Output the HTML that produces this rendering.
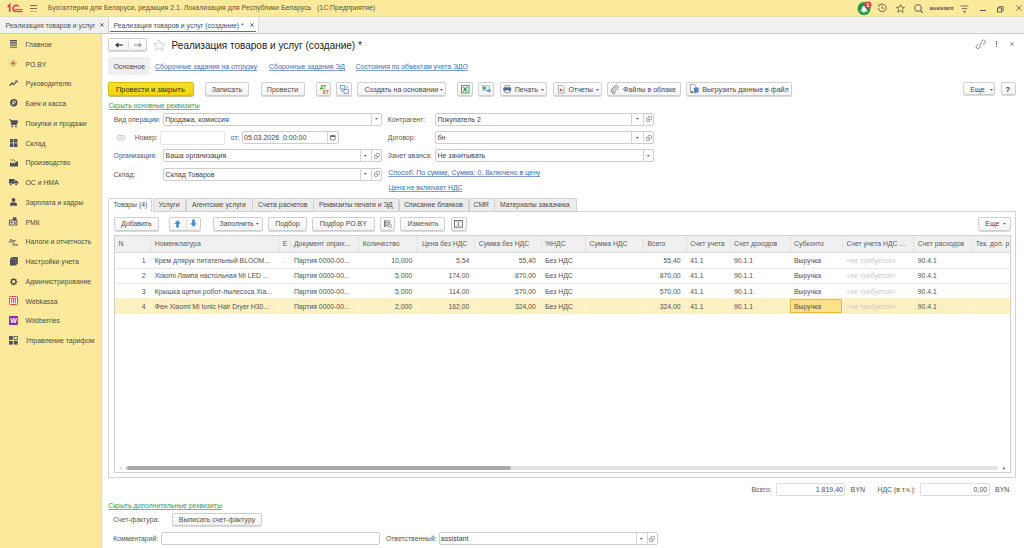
<!DOCTYPE html>
<html><head><meta charset="utf-8"><style>
*{box-sizing:border-box;margin:0;padding:0}
html,body{width:1024px;height:548px;overflow:hidden;background:#fff;font-family:"Liberation Sans",sans-serif;font-size:7px;color:#454545}
.a{position:absolute;white-space:nowrap}
.lnk{color:#3c6db0;text-decoration:underline;text-decoration-color:#7fa0d0;text-decoration-thickness:0.5px;text-underline-offset:1px;text-decoration-skip-ink:none}
.glnk{color:#2f9c50;text-decoration:underline;text-decoration-color:#6cbf86;text-decoration-thickness:0.5px;text-underline-offset:1px;text-decoration-skip-ink:none}
.btn{position:absolute;border:1px solid #cfcfcf;border-radius:2px;background:linear-gradient(#ffffff,#f3f3f3);box-shadow:0 0.8px 0.5px rgba(0,0,0,0.2)}
.inp{position:absolute;border:1px solid #cdcdcd;border-radius:2px;background:#fff}
</style></head><body>
<div class="a" style="left:0px;top:0px;width:1024.00px;height:16.50px;background:#fbea9c"></div>
<div class="a" style="left:0px;top:16.5px;width:1024.00px;height:17.00px;background:#f1f1f1;border-bottom:1px solid #c9c9c9"></div>
<div class="a" style="left:0px;top:16px;width:1024.00px;height:1.00px;background:#e6dfb0"></div>
<svg class="a" style="left:6.5px;top:3.8px;overflow:visible" width="16" height="8.5" viewBox="0 0 16 8.5"><path d="M0.6 2.9 L2.7 0.6 V7.8" fill="none" stroke="#e8313b" stroke-width="1.5"/><path d="M11.9 2.6 A3.3 3.3 0 1 0 7.4 7.3" fill="none" stroke="#e8313b" stroke-width="1.4"/><rect x="7" y="5.2" width="8.6" height="1.05" fill="#e8313b"/><rect x="7" y="7.1" width="8.6" height="1.05" fill="#e8313b"/></svg>
<div class="a" style="left:30px;top:5px;width:7.30px;height:0.95px;background:#7a6c4e"></div>
<div class="a" style="left:30px;top:8px;width:7.30px;height:0.95px;background:#7a6c4e"></div>
<div class="a" style="left:30px;top:10.5px;width:7.30px;height:0.95px;background:#bfb27a"></div>
<div class="a " style="left:48px;top:4.00px;font-size:6.95px;line-height:7.99px;color:#5a5240;">Бухгалтерия для Беларуси, редакция 2.1. Локализация для Республики Беларусь&nbsp;&nbsp;&nbsp;(1С:Предприятие)</div>
<svg class="a" style="left:856.5px;top:1.5px;overflow:visible" width="14" height="14" viewBox="0 0 14 14"><circle cx="7" cy="6.6" r="6.5" fill="#1f9a4c"/><path d="M3.4 9.4 Q3.6 8.6 4.6 7.6 L5.2 5.2 Q7 2.6 8.8 5.2 L9.4 7.6 Q10.4 8.6 10.6 9.4 Z" fill="#fff"/><path d="M6 10.3 H8" stroke="#fff" stroke-width="0.9"/></svg>
<svg class="a" style="left:863.5px;top:0.6px;overflow:visible" width="8" height="8" viewBox="0 0 8 8"><circle cx="3.9" cy="4" r="3.6" fill="#e23a45"/><text x="3.9" y="6.3" font-family="Liberation Sans" font-weight="bold" font-size="6" fill="#fff" text-anchor="middle">1</text></svg>
<svg class="a" style="left:877px;top:3.1px;overflow:visible" width="10" height="10" viewBox="0 0 10 10"><path d="M1.5 5 A3.8 3.8 0 1 0 2.6 2.2" fill="none" stroke="#555" stroke-width="0.9"/><path d="M0.8 1.2 L2.8 2.6 L1.2 3.8" fill="none" stroke="#555" stroke-width="0.8"/><path d="M5.3 2.8 L5.3 5.2 L6.8 6.3" fill="none" stroke="#555" stroke-width="0.8"/></svg>
<svg class="a" style="left:895.5px;top:3.5px;overflow:visible" width="9" height="9" viewBox="0 0 9 9"><path d="M4.5 0.5 L5.7 3.2 L8.5 3.4 L6.4 5.3 L7.1 8.3 L4.5 6.7 L1.9 8.3 L2.6 5.3 L0.5 3.4 L3.3 3.2 Z" fill="none" stroke="#555" stroke-width="0.8" stroke-linejoin="round"/></svg>
<svg class="a" style="left:913.5px;top:3.5px;overflow:visible" width="9" height="10" viewBox="0 0 9 10"><circle cx="4" cy="4" r="3.4" fill="none" stroke="#555" stroke-width="0.9"/><path d="M6.4 6.4 L8.6 8.8" stroke="#555" stroke-width="1.1"/></svg>
<div class="a " style="left:929.5px;top:4.08px;font-size:6.1px;line-height:7.01px;color:#222;">assistant</div>
<svg class="a" style="left:960px;top:4.5px;overflow:visible" width="9" height="9" viewBox="0 0 9 9"><path d="M0.5 1 H8.5 M1.8 3.6 H7.2 M3 6.2 H6" stroke="#555" stroke-width="0.8"/><path d="M3.8 7.2 L5.2 7.2 L4.5 8.4 Z" fill="#555"/></svg>
<div class="a" style="left:980px;top:9.8px;width:5.50px;height:0.80px;background:#555"></div>
<svg class="a" style="left:997px;top:5.5px;overflow:visible" width="7" height="7" viewBox="0 0 7 7"><rect x="0.5" y="2" width="4.2" height="4" fill="none" stroke="#555" stroke-width="0.9"/><path d="M2 2 V0.6 H6.2 V4.6 H4.7" fill="none" stroke="#555" stroke-width="0.8"/></svg>
<svg class="a" style="left:1015.5px;top:5px;overflow:visible" width="6" height="6" viewBox="0 0 6 6"><path d="M0.3 0.3 L5.7 5.7 M5.7 0.3 L0.3 5.7" stroke="#555" stroke-width="0.8"/></svg>
<div class="a " style="left:5.5px;top:21.79px;font-size:6.85px;line-height:7.88px;color:#4a4e5e;">Реализация товаров и услуг</div>
<svg class="a" style="left:100px;top:22.7px;overflow:visible" width="3.8" height="3.8" viewBox="0 0 3.8 3.8"><path d="M0.3 0.3 L3.5 3.5 M3.5 0.3 L0.3 3.5" stroke="#555" stroke-width="0.9"/></svg>
<div class="a" style="left:107.5px;top:17px;width:1.00px;height:16.00px;background:#d0d0d0"></div>
<div class="a" style="left:108.5px;top:17px;width:149.00px;height:16.00px;background:#fff"></div>
<div class="a" style="left:109.8px;top:30.6px;width:146.40px;height:1.00px;background:#1e9a48;border-radius:0.5px"></div>
<div class="a" style="left:257.5px;top:17px;width:0.80px;height:16.00px;background:#d6d6d6"></div>
<div class="a " style="left:113.5px;top:21.79px;font-size:6.85px;line-height:7.88px;color:#4a4e5e;">Реализация товаров и услуг (создание) *</div>
<svg class="a" style="left:250px;top:22.7px;overflow:visible" width="3.8" height="3.8" viewBox="0 0 3.8 3.8"><path d="M0.3 0.3 L3.5 3.5 M3.5 0.3 L0.3 3.5" stroke="#555" stroke-width="0.9"/></svg>
<div class="a" style="left:0px;top:33.5px;width:101.30px;height:514.50px;background:#fbea9c"></div>
<div class="a" style="left:101.1px;top:33.5px;width:0.70px;height:514.50px;background:#dcd6b4"></div>
<div class="a " style="left:25.5px;top:40.94px;font-size:6.9px;line-height:7.93px;color:#4a4a4a;">Главное</div>
<div class="a " style="left:25.5px;top:60.69px;font-size:6.9px;line-height:7.93px;color:#4a4a4a;">РО.BY</div>
<div class="a " style="left:25.5px;top:80.44px;font-size:6.9px;line-height:7.93px;color:#4a4a4a;">Руководителю</div>
<div class="a " style="left:25.5px;top:100.19px;font-size:6.9px;line-height:7.93px;color:#4a4a4a;">Банк и касса</div>
<div class="a " style="left:25.5px;top:119.94px;font-size:6.9px;line-height:7.93px;color:#4a4a4a;">Покупки и продажи</div>
<div class="a " style="left:25.5px;top:139.69px;font-size:6.9px;line-height:7.93px;color:#4a4a4a;">Склад</div>
<div class="a " style="left:25.5px;top:159.44px;font-size:6.9px;line-height:7.93px;color:#4a4a4a;">Производство</div>
<div class="a " style="left:25.5px;top:179.19px;font-size:6.9px;line-height:7.93px;color:#4a4a4a;">ОС и НМА</div>
<div class="a " style="left:25.5px;top:198.94px;font-size:6.9px;line-height:7.93px;color:#4a4a4a;">Зарплата и кадры</div>
<div class="a " style="left:25.5px;top:218.69px;font-size:6.9px;line-height:7.93px;color:#4a4a4a;">РМК</div>
<div class="a " style="left:25.5px;top:238.44px;font-size:6.9px;line-height:7.93px;color:#4a4a4a;">Налоги и отчетность</div>
<div class="a " style="left:25.5px;top:258.19px;font-size:6.9px;line-height:7.93px;color:#4a4a4a;">Настройки учета</div>
<div class="a " style="left:25.5px;top:277.94px;font-size:6.9px;line-height:7.93px;color:#4a4a4a;">Администрирование</div>
<div class="a " style="left:25.5px;top:297.69px;font-size:6.9px;line-height:7.93px;color:#4a4a4a;">Webkassa</div>
<div class="a " style="left:25.5px;top:317.44px;font-size:6.9px;line-height:7.93px;color:#4a4a4a;">Wildberries</div>
<div class="a " style="left:25.5px;top:337.19px;font-size:6.9px;line-height:7.93px;color:#4a4a4a;">Управление тарифом</div>
<svg class="a" style="left:10px;top:40px;overflow:visible" width="7" height="8" viewBox="0 0 7 8"><rect x="0" y="0" width="7" height="1.1" fill="#4a4a5c"/><rect x="0" y="1.75" width="7" height="1.1" fill="#4a4a5c"/><rect x="0" y="3.5" width="7" height="1.1" fill="#5a5a5a"/><rect x="0" y="5.25" width="7" height="1.1" fill="#77745a"/><rect x="0" y="7" width="7" height="1.1" fill="#8d8966"/></svg>
<svg class="a" style="left:9px;top:58.5px;overflow:visible" width="8.5" height="8.5" viewBox="0 0 8.5 8.5"><path d="M4.25 0.5 V8 M0.5 4.25 H8 M1.5 1.5 L7 7 M7 1.5 L1.5 7" stroke="#b07a4a" stroke-width="0.7"/><circle cx="4.25" cy="4.25" r="1" fill="#d9403a"/></svg>
<svg class="a" style="left:9px;top:80px;overflow:visible" width="9" height="6.5" viewBox="0 0 9 6.5"><path d="M0.6 5.8 L3 3 L4.6 4.6 L7.4 1.4" fill="none" stroke="#4e4e5e" stroke-width="1.3"/><path d="M6 0.5 L8.6 0.5 L8.6 3 Z" fill="#4e4e5e"/></svg>
<svg class="a" style="left:10px;top:99.3px;overflow:visible" width="7.6" height="7.6" viewBox="0 0 7.6 7.6"><circle cx="3.8" cy="3.8" r="3.7" fill="#4e4e5e"/><path d="M3 6 V1.9 H4.3 A1.2 1.2 0 0 1 4.3 4.3 H2.2" fill="none" stroke="#fbea9c" stroke-width="0.9"/></svg>
<svg class="a" style="left:9px;top:118.5px;overflow:visible" width="9" height="8.5" viewBox="0 0 9 8.5"><path d="M0.3 0.8 H1.8 L2.6 5.6 H7.6 L8.6 1.8 H2" fill="#4e4e5e" stroke="#4e4e5e" stroke-width="0.9" stroke-linejoin="round"/><circle cx="3.2" cy="7.4" r="0.9" fill="#4e4e5e"/><circle cx="7" cy="7.4" r="0.9" fill="#4e4e5e"/></svg>
<svg class="a" style="left:9.5px;top:138.8px;overflow:visible" width="7.5" height="8" viewBox="0 0 7.5 8"><rect x="0" y="0" width="3.4" height="3.6" fill="#4e4e5e"/><rect x="4" y="0" width="3.4" height="3.6" fill="#4e4e5e"/><rect x="0" y="4.3" width="3.4" height="3.7" fill="#4e4e5e"/><rect x="4" y="4.3" width="3.4" height="3.7" fill="#4e4e5e"/><rect x="1.2" y="1.3" width="1" height="0.8" fill="#8f8a6a"/><rect x="5.2" y="1.3" width="1" height="0.8" fill="#8f8a6a"/></svg>
<svg class="a" style="left:9.5px;top:158.8px;overflow:visible" width="8" height="7.5" viewBox="0 0 8 7.5"><path d="M0 7.5 V3.2 L2.6 4.8 V3.2 L5.2 4.8 V2.5 H8 V7.5 Z" fill="#4e4e5e"/><path d="M0.6 0.4 L2.8 2 M3 0.3 L5 1.8" stroke="#4e4e5e" stroke-width="0.8"/></svg>
<svg class="a" style="left:8.8px;top:179px;overflow:visible" width="9.2" height="6.8" viewBox="0 0 9.2 6.8"><rect x="0" y="0" width="5.6" height="4.8" fill="#4e4e5e"/><path d="M5.9 1.5 H7.6 L9.2 3.3 V4.8 H5.9 Z" fill="#4e4e5e"/><circle cx="1.8" cy="5.6" r="1.1" fill="#4e4e5e" stroke="#fbea9c" stroke-width="0.5"/><circle cx="7.2" cy="5.6" r="1.1" fill="#4e4e5e" stroke="#fbea9c" stroke-width="0.5"/></svg>
<svg class="a" style="left:10px;top:197.5px;overflow:visible" width="7" height="7.8" viewBox="0 0 7 7.8"><circle cx="3.5" cy="1.9" r="1.9" fill="#4e4e5e"/><path d="M0 7.8 V6.3 Q0 4.3 3.5 4.3 Q7 4.3 7 6.3 V7.8 Z" fill="#4e4e5e"/></svg>
<svg class="a" style="left:9.1px;top:216.7px;overflow:visible" width="8.3" height="8.4" viewBox="0 0 8.3 8.4"><rect x="0.4" y="3.2" width="7.5" height="4.8" fill="none" stroke="#4e4e5e" stroke-width="0.9"/><rect x="3.8" y="0.3" width="3.6" height="3" fill="#4e4e5e"/><rect x="1.6" y="4.6" width="2.2" height="1.6" fill="#4e4e5e"/><rect x="4.8" y="4.6" width="2.2" height="2.4" fill="#8f8a6a"/></svg>
<svg class="a" style="left:9.2px;top:238px;overflow:visible" width="8.5" height="8" viewBox="0 0 8.5 8"><text x="0" y="3.5" font-family="Liberation Sans" font-style="italic" font-weight="bold" font-size="4" fill="#4e4e5e">Дт</text><text x="3.6" y="7.6" font-family="Liberation Sans" font-style="italic" font-weight="bold" font-size="3.6" fill="#4e4e5e">Кт</text><path d="M2.5 6 L5.8 2.6" stroke="#4e4e5e" stroke-width="0.4"/></svg>
<svg class="a" style="left:9.8px;top:257px;overflow:visible" width="7.8" height="8.4" viewBox="0 0 7.8 8.4"><path d="M0 2 L2 0 H7.8 V6.4 L5.8 8.4 H0 Z" fill="#4e4e5e"/><path d="M0 2 H5.8 V8.4 M5.8 2 L7.8 0" fill="none" stroke="#8f8a6a" stroke-width="0.5"/></svg>
<svg class="a" style="left:9.8px;top:277.6px;overflow:visible" width="7.4" height="7.4" viewBox="0 0 7.4 7.4"><circle cx="3.7" cy="3.7" r="2.3" fill="none" stroke="#4e4e5e" stroke-width="1.3"/><path d="M3.7 0 V1.6 M3.7 5.8 V7.4 M0 3.7 H1.6 M5.8 3.7 H7.4 M1.1 1.1 L2.2 2.2 M5.2 5.2 L6.3 6.3 M6.3 1.1 L5.2 2.2 M2.2 5.2 L1.1 6.3" stroke="#4e4e5e" stroke-width="1.1"/></svg>
<svg class="a" style="left:9.2px;top:296px;overflow:visible" width="9" height="9" viewBox="0 0 9 9"><rect x="0.5" y="0.5" width="8" height="8" rx="0.8" fill="#fff" stroke="#e8434a" stroke-width="1"/><path d="M1.8 2.4 H7.2" stroke="#e8434a" stroke-width="0.9"/><path d="M2.6 2.4 V7.4 M4.5 2.4 V7.4 M6.4 2.4 V7.4" stroke="#e8434a" stroke-width="0.9"/><path d="M3.55 3.6 V6 M5.45 3.6 V6" stroke="#f2a0a0" stroke-width="0.6"/></svg>
<svg class="a" style="left:9.2px;top:316.4px;overflow:visible" width="8.9" height="8.9" viewBox="0 0 8.9 8.9"><rect x="0" y="0" width="8.9" height="8.9" rx="0.6" fill="#8f2ea6"/><text x="4.45" y="7.3" font-family="Liberation Sans" font-weight="bold" font-size="7" fill="#fff" text-anchor="middle">W</text></svg>
<svg class="a" style="left:9.2px;top:336px;overflow:visible" width="9" height="8.6" viewBox="0 0 9 8.6"><rect x="0" y="0" width="3.8" height="3.8" fill="#4e4e5e"/><rect x="5" y="0.4" width="3.4" height="3.2" fill="none" stroke="#4e4e5e" stroke-width="0.8"/><rect x="0" y="4.8" width="3.8" height="3.8" fill="#4e4e5e"/><rect x="4.8" y="4.8" width="3.8" height="3.8" fill="#4e4e5e"/></svg>
<div class="btn" style="left:108.2px;top:38px;width:39.00px;height:13.00px;"></div>
<div class="a" style="left:128px;top:38.5px;width:0.80px;height:12.00px;background:#dedede"></div>
<svg class="a" style="left:114.5px;top:41.5px;overflow:visible" width="8" height="6" viewBox="0 0 8 6"><path d="M1.5 3 H7.8" stroke="#3d3d3d" stroke-width="1.3"/><path d="M0 3 L3.4 0.2 V5.8 Z" fill="#3d3d3d"/></svg>
<svg class="a" style="left:133.5px;top:41.5px;overflow:visible" width="8" height="6" viewBox="0 0 8 6"><path d="M0.2 3 H6.5" stroke="#9a9a9a" stroke-width="1.1"/><path d="M8 3 L4.8 0.4 V5.6 Z" fill="#9a9a9a"/></svg>
<svg class="a" style="left:153px;top:38.5px;overflow:visible" width="12.5" height="12" viewBox="0 0 12.5 12"><path d="M6.25 0.8 L7.9 4.6 L11.9 4.9 L8.8 7.5 L9.8 11.4 L6.25 9.3 L2.7 11.4 L3.7 7.5 L0.6 4.9 L4.6 4.6 Z" fill="none" stroke="#c4c4c4" stroke-width="0.8" stroke-linejoin="round"/></svg>
<div class="a " style="left:171.6px;top:39.69px;font-size:10px;line-height:11.5px;color:#222;">Реализация товаров и услуг (создание) *</div>
<svg class="a" style="left:975.5px;top:39.5px;overflow:visible" width="10" height="9" viewBox="0 0 10 9"><g transform="translate(4.7 4.3) rotate(-42) translate(-6 -2.1)" fill="none" stroke="#7a7a7a" stroke-width="0.85"><path d="M4.8 0.4 H2.1 A1.7 1.7 0 0 0 2.1 3.8 H4.8"/><path d="M7.2 0.4 H9.9 A1.7 1.7 0 0 1 9.9 3.8 H7.2"/><path d="M4.2 2.1 H7.8"/></g></svg>
<div class="a" style="left:995.8px;top:41px;width:1.00px;height:4.00px;background:#777"></div>
<div class="a" style="left:995.8px;top:46px;width:1.00px;height:1.00px;background:#555"></div>
<svg class="a" style="left:1010.3px;top:42.3px;overflow:visible" width="4" height="3.8" viewBox="0 0 4 3.8"><path d="M0.3 0.3 L3.7 3.5 M3.7 0.3 L0.3 3.5" stroke="#777" stroke-width="0.9"/></svg>
<div class="a" style="left:108.2px;top:57px;width:41.80px;height:17.50px;background:#efefef;border-radius:2px"></div>
<div class="a " style="left:113.5px;top:62.54px;font-size:6.9px;line-height:7.93px;color:#4a4a4a;">Основное</div>
<div class="a lnk" style="left:155px;top:62.54px;font-size:6.9px;line-height:7.93px;">Сборочные задания на отгрузку</div>
<div class="a lnk" style="left:269px;top:62.54px;font-size:6.9px;line-height:7.93px;">Сборочные задания ЭД</div>
<div class="a lnk" style="left:355.6px;top:62.54px;font-size:6.9px;line-height:7.93px;">Состояния по объектам учета ЭДО</div>
<div class="a" style="left:108.2px;top:82px;width:85.6px;height:13.7px;background:linear-gradient(#fadf2a,#f4d50c);border:1px solid #d9bb00;border-radius:2px;box-shadow:0 0.8px 0.6px #b9a54a"></div>
<div class="a " style="left:116px;top:85.53px;font-size:7.45px;line-height:8.57px;color:#2a2a2a;">Провести и закрыть</div>
<div class="btn" style="left:205.2px;top:82px;width:43.50px;height:13.70px;"></div>
<div class="a " style="left:206.95px;top:85.86px;font-size:7.1px;line-height:8.16px;color:#4a4a4a;width:40px;text-align:center;">Записать</div>
<div class="btn" style="left:260.5px;top:82px;width:44.00px;height:13.70px;"></div>
<div class="a " style="left:262.5px;top:85.86px;font-size:7.1px;line-height:8.16px;color:#4a4a4a;width:40px;text-align:center;">Провести</div>
<div class="btn" style="left:315.7px;top:82px;width:15.30px;height:13.70px;"></div>
<svg class="a" style="left:319.5px;top:84.5px;overflow:visible" width="8" height="9" viewBox="0 0 8 9"><text x="0" y="4" font-family="Liberation Sans" font-weight="bold" font-size="4.6" fill="#2a9a4a">ДТ</text><text x="3" y="8.6" font-family="Liberation Sans" font-weight="bold" font-size="4.6" fill="#e04a3a">КТ</text></svg>
<div class="btn" style="left:336px;top:82px;width:16.30px;height:13.70px;"></div>
<svg class="a" style="left:339.5px;top:84.5px;overflow:visible" width="9" height="9" viewBox="0 0 9 9"><rect x="0.4" y="0.4" width="4.2" height="3.6" fill="none" stroke="#4a82c8" stroke-width="0.7"/><rect x="4" y="4.6" width="4.4" height="3.8" fill="none" stroke="#4a82c8" stroke-width="0.7"/><path d="M1 6 H3 M6 2 H8" stroke="#4a82c8" stroke-width="0.7"/><path d="M2.5 4.6 V7.2 M6.4 1.2 V4" stroke="#8aa8d8" stroke-width="0.6"/></svg>
<div class="btn" style="left:357.4px;top:82px;width:88.70px;height:13.70px;"></div>
<div class="a " style="left:364.6px;top:85.86px;font-size:7.1px;line-height:8.16px;color:#4a4a4a;">Создать на основании</div>
<svg class="a" style="left:439.5px;top:88.5px;overflow:visible" width="3" height="2" viewBox="0 0 3 2"><path d="M0 0 H3 L1.5 1.8 Z" fill="#555"/></svg>
<div class="btn" style="left:457.3px;top:82px;width:15.60px;height:13.70px;"></div>
<svg class="a" style="left:461px;top:84.6px;overflow:visible" width="8.4" height="8.4" viewBox="0 0 8.4 8.4"><rect x="0.4" y="0.4" width="7.6" height="7.6" fill="#eaf5ec" stroke="#2a8a4a" stroke-width="0.8"/><path d="M2.3 2 L6.1 6.4 M6.1 2 L2.3 6.4" stroke="#2a8a4a" stroke-width="1.1"/></svg>
<div class="btn" style="left:478.2px;top:82px;width:15.80px;height:13.70px;"></div>
<svg class="a" style="left:481.5px;top:85px;overflow:visible" width="9.5" height="8" viewBox="0 0 9.5 8"><rect x="0.5" y="0.5" width="7" height="5" fill="#dfeaf6" stroke="#8fb2dc" stroke-width="0.6"/><circle cx="2.4" cy="3" r="1.5" fill="#3aa04a"/><path d="M4.5 5.8 H8 M6.6 4.2 L8.6 5.8 L6.6 7.4" fill="none" stroke="#3a78c8" stroke-width="1"/></svg>
<div class="btn" style="left:499.5px;top:82px;width:47.70px;height:13.70px;"></div>
<svg class="a" style="left:502.5px;top:84.8px;overflow:visible" width="8.5" height="8" viewBox="0 0 8.5 8"><rect x="2" y="0.3" width="4.5" height="2.5" fill="#fff" stroke="#555" stroke-width="0.5"/><rect x="0.3" y="2.6" width="7.9" height="3.6" rx="1" fill="#4d6e98"/><rect x="2" y="5" width="4.5" height="2.8" fill="#fff" stroke="#555" stroke-width="0.5"/></svg>
<div class="a " style="left:514.7px;top:85.86px;font-size:7.1px;line-height:8.16px;color:#4a4a4a;">Печать</div>
<svg class="a" style="left:541px;top:88.5px;overflow:visible" width="3" height="2" viewBox="0 0 3 2"><path d="M0 0 H3 L1.5 1.8 Z" fill="#555"/></svg>
<div class="btn" style="left:552.5px;top:82px;width:49.00px;height:13.70px;"></div>
<svg class="a" style="left:557.5px;top:84.5px;overflow:visible" width="6.5" height="8.5" viewBox="0 0 6.5 8.5"><path d="M0.4 0.4 H4.4 L6.1 2.1 V8.1 H0.4 Z" fill="#fff" stroke="#777" stroke-width="0.6"/><rect x="1.8" y="3.6" width="1.3" height="2.6" fill="#e04040"/><rect x="3.3" y="4.6" width="1.3" height="1.6" fill="#3a9a4a"/></svg>
<div class="a " style="left:568.4px;top:85.86px;font-size:7.1px;line-height:8.16px;color:#4a4a4a;">Отчеты</div>
<svg class="a" style="left:595.5px;top:88.5px;overflow:visible" width="3" height="2" viewBox="0 0 3 2"><path d="M0 0 H3 L1.5 1.8 Z" fill="#555"/></svg>
<div class="btn" style="left:606.6px;top:82px;width:74.00px;height:13.70px;"></div>
<svg class="a" style="left:610.5px;top:85px;overflow:visible" width="7.5" height="7.5" viewBox="0 0 7.5 7.5"><path d="M5.6 1.8 L2 5.4 A1 1 0 0 0 3.4 6.8 L6.6 3.6 A1.8 1.8 0 0 0 4 1 L1 4 A2.6 2.6 0 0 0 4.7 7.7" fill="none" stroke="#777" stroke-width="0.9"/></svg>
<div class="a " style="left:622.9px;top:85.86px;font-size:7.1px;line-height:8.16px;color:#4a4a4a;">Файлы в облаке</div>
<div class="btn" style="left:686.3px;top:82px;width:106.20px;height:13.70px;"></div>
<svg class="a" style="left:690px;top:84px;overflow:visible" width="9" height="9.5" viewBox="0 0 9 9.5"><path d="M0.4 0.4 H4.4 L6 2 V8.6 H0.4 Z" fill="#fff" stroke="#666" stroke-width="0.6"/><rect x="3.8" y="3.6" width="4.8" height="5" fill="#4a86c8"/><path d="M1 8 H3" stroke="#222" stroke-width="1"/></svg>
<div class="a " style="left:702.2px;top:85.86px;font-size:7.1px;line-height:8.16px;color:#4a4a4a;">Выгрузить данные в файл</div>
<div class="btn" style="left:963.4px;top:82.3px;width:32.10px;height:13.20px;"></div>
<div class="a " style="left:970.3px;top:85.86px;font-size:7.1px;line-height:8.16px;color:#4a4a4a;">Еще</div>
<svg class="a" style="left:989.5px;top:88.5px;overflow:visible" width="3" height="2" viewBox="0 0 3 2"><path d="M0 0 H3 L1.5 1.8 Z" fill="#555"/></svg>
<div class="btn" style="left:1000.5px;top:82.3px;width:15.70px;height:13.20px;"></div>
<div class="a " style="left:1005.5px;top:85.59px;font-size:7.5px;line-height:8.62px;color:#333;font-weight:bold">?</div>
<div class="a glnk" style="left:108.4px;top:101.99px;font-size:6.85px;line-height:7.88px;">Скрыть основные реквизиты</div>
<div class="a " style="left:113.8px;top:115.59px;font-size:6.85px;line-height:7.88px;color:#555;">Вид операции:</div>
<div class="inp" style="left:163px;top:112.8px;width:219.00px;height:13.00px;border-color:#cdcdcd"></div>
<div class="a" style="left:370.5px;top:113.3px;width:0.80px;height:12.00px;background:#d4d4d4"></div>
<div class="a " style="left:165.2px;top:115.75px;font-size:7.0px;line-height:8.05px;color:#3e3e3e;">Продажа, комиссия</div>
<svg class="a" style="left:374.8px;top:118.39999999999999px;overflow:visible" width="3" height="2" viewBox="0 0 3 2"><path d="M0 0 H2.8 L1.4 1.7 Z" fill="#555"/></svg>
<svg class="a" style="left:117px;top:135px;overflow:visible" width="8" height="5.6" viewBox="0 0 8 5.6"><rect x="0.4" y="0.4" width="7.2" height="4.8" rx="0.8" fill="#f2f2f2" stroke="#bdbdbd" stroke-width="0.7"/><path d="M2 2 H6 M2 3.4 H6" stroke="#c8c8c8" stroke-width="0.5"/></svg>
<div class="a " style="left:134.8px;top:133.89px;font-size:6.85px;line-height:7.88px;color:#555;">Номер:</div>
<div class="inp" style="left:160.4px;top:131.2px;width:64.80px;height:13.60px;border-color:#e4e4e4"></div>
<div class="a " style="left:230.8px;top:133.89px;font-size:6.85px;line-height:7.88px;color:#555;">от:</div>
<div class="inp" style="left:241.8px;top:131.2px;width:96.80px;height:13.30px;border-color:#cdcdcd"></div>
<div class="a" style="left:327.2px;top:131.7px;width:0.80px;height:12.30px;background:#d4d4d4"></div>
<div class="a " style="left:244.0px;top:134.15px;font-size:7.0px;line-height:8.05px;color:#3e3e3e;">05.03.2026&nbsp;&nbsp;0:00:00</div>
<svg class="a" style="left:330.0px;top:135.15px;overflow:visible" width="5.6" height="5.4" viewBox="0 0 5.6 5.4"><rect x="0.4" y="0.6" width="4.8" height="4.4" rx="0.5" fill="#fff" stroke="#555" stroke-width="0.7"/><rect x="0.4" y="0.6" width="4.8" height="1.3" fill="#555"/></svg>
<div class="a " style="left:113.6px;top:152.09px;font-size:6.85px;line-height:7.88px;color:#555;">Организация:</div>
<div class="inp" style="left:163.4px;top:149.3px;width:218.60px;height:13.00px;border-color:#cdcdcd"></div>
<div class="a" style="left:359.8px;top:149.8px;width:0.80px;height:12.00px;background:#d4d4d4"></div>
<div class="a" style="left:370.5px;top:149.8px;width:0.80px;height:12.00px;background:#d4d4d4"></div>
<div class="a " style="left:165.6px;top:152.25px;font-size:7.0px;line-height:8.05px;color:#3e3e3e;">Ваша организация</div>
<svg class="a" style="left:363.6px;top:154.9px;overflow:visible" width="3" height="2" viewBox="0 0 3 2"><path d="M0 0 H2.8 L1.4 1.7 Z" fill="#555"/></svg>
<svg class="a" style="left:373.5px;top:152.8px;overflow:visible" width="6" height="6" viewBox="0 0 6 6"><rect x="0.4" y="2.2" width="3.2" height="3.2" rx="0.6" fill="#fff" stroke="#666" stroke-width="0.6"/><rect x="2.2" y="0.4" width="3.2" height="3.2" rx="0.6" fill="#fff" stroke="#666" stroke-width="0.6"/></svg>
<div class="a " style="left:113.6px;top:170.69px;font-size:6.85px;line-height:7.88px;color:#555;">Склад:</div>
<div class="inp" style="left:163.4px;top:167.6px;width:218.60px;height:13.00px;border-color:#cdcdcd"></div>
<div class="a" style="left:359.8px;top:168.1px;width:0.80px;height:12.00px;background:#d4d4d4"></div>
<div class="a" style="left:370.5px;top:168.1px;width:0.80px;height:12.00px;background:#d4d4d4"></div>
<div class="a " style="left:165.6px;top:170.55px;font-size:7.0px;line-height:8.05px;color:#3e3e3e;">Склад Товаров</div>
<svg class="a" style="left:363.6px;top:173.2px;overflow:visible" width="3" height="2" viewBox="0 0 3 2"><path d="M0 0 H2.8 L1.4 1.7 Z" fill="#555"/></svg>
<svg class="a" style="left:373.5px;top:171.1px;overflow:visible" width="6" height="6" viewBox="0 0 6 6"><rect x="0.4" y="2.2" width="3.2" height="3.2" rx="0.6" fill="#fff" stroke="#666" stroke-width="0.6"/><rect x="2.2" y="0.4" width="3.2" height="3.2" rx="0.6" fill="#fff" stroke="#666" stroke-width="0.6"/></svg>
<div class="a " style="left:387.8px;top:115.59px;font-size:6.85px;line-height:7.88px;color:#555;">Контрагент:</div>
<div class="inp" style="left:435.2px;top:112.8px;width:219.00px;height:13.00px;border-color:#cdcdcd"></div>
<div class="a" style="left:631.4px;top:113.3px;width:0.80px;height:12.00px;background:#d4d4d4"></div>
<div class="a" style="left:642.8px;top:113.3px;width:0.80px;height:12.00px;background:#d4d4d4"></div>
<div class="a " style="left:437.4px;top:115.75px;font-size:7.0px;line-height:8.05px;color:#3e3e3e;">Покупатель 2</div>
<svg class="a" style="left:635.6px;top:118.39999999999999px;overflow:visible" width="3" height="2" viewBox="0 0 3 2"><path d="M0 0 H2.8 L1.4 1.7 Z" fill="#555"/></svg>
<svg class="a" style="left:645.5px;top:116.3px;overflow:visible" width="6" height="6" viewBox="0 0 6 6"><rect x="0.4" y="2.2" width="3.2" height="3.2" rx="0.6" fill="#fff" stroke="#666" stroke-width="0.6"/><rect x="2.2" y="0.4" width="3.2" height="3.2" rx="0.6" fill="#fff" stroke="#666" stroke-width="0.6"/></svg>
<div class="a " style="left:387.8px;top:133.89px;font-size:6.85px;line-height:7.88px;color:#555;">Договор:</div>
<div class="inp" style="left:435.2px;top:131.2px;width:219.00px;height:13.20px;border-color:#cdcdcd"></div>
<div class="a" style="left:631.4px;top:131.7px;width:0.80px;height:12.20px;background:#d4d4d4"></div>
<div class="a" style="left:642.8px;top:131.7px;width:0.80px;height:12.20px;background:#d4d4d4"></div>
<div class="a " style="left:437.4px;top:134.15px;font-size:7.0px;line-height:8.05px;color:#3e3e3e;">бн</div>
<svg class="a" style="left:635.6px;top:136.9px;overflow:visible" width="3" height="2" viewBox="0 0 3 2"><path d="M0 0 H2.8 L1.4 1.7 Z" fill="#555"/></svg>
<svg class="a" style="left:645.5px;top:134.8px;overflow:visible" width="6" height="6" viewBox="0 0 6 6"><rect x="0.4" y="2.2" width="3.2" height="3.2" rx="0.6" fill="#fff" stroke="#666" stroke-width="0.6"/><rect x="2.2" y="0.4" width="3.2" height="3.2" rx="0.6" fill="#fff" stroke="#666" stroke-width="0.6"/></svg>
<div class="a " style="left:387.8px;top:152.09px;font-size:6.85px;line-height:7.88px;color:#555;">Зачет аванса:</div>
<div class="inp" style="left:435.2px;top:149.3px;width:219.00px;height:13.00px;border-color:#cdcdcd"></div>
<div class="a" style="left:642.8px;top:149.8px;width:0.80px;height:12.00px;background:#d4d4d4"></div>
<div class="a " style="left:437.4px;top:152.25px;font-size:7.0px;line-height:8.05px;color:#3e3e3e;">Не зачитывать</div>
<svg class="a" style="left:647.1px;top:154.9px;overflow:visible" width="3" height="2" viewBox="0 0 3 2"><path d="M0 0 H2.8 L1.4 1.7 Z" fill="#555"/></svg>
<div class="a lnk" style="left:388.2px;top:168.85px;font-size:7.0px;line-height:8.05px;">Способ: По сумме, Сумма: 0, Включено в цену</div>
<div class="a lnk" style="left:388.5px;top:184.09px;font-size:6.85px;line-height:7.88px;">Цена не включает НДС</div>
<div class="a" style="left:108.2px;top:211.5px;width:907.9px;height:266px;border:1px solid #d2d2d2;border-top:none"></div>
<div class="a" style="left:152.5px;top:211.2px;width:863.50px;height:1.00px;background:#d2d2d2"></div>
<div class="a" style="left:108.2px;top:197.6px;width:44.30px;height:14.6px;background:#fff;border:1px solid #d2d2d2;border-bottom:none;border-radius:2px 2px 0 0"></div>
<div class="a " style="left:80.35px;top:201.19px;font-size:6.85px;line-height:7.88px;color:#4a4a4a;width:100px;text-align:center;">Товары (4)</div>
<div class="a" style="left:152.5px;top:197.9px;width:33.90px;height:13.6px;background:#ececec;border:1px solid #d2d2d2;border-bottom:none;border-radius:2px 2px 0 0"></div>
<div class="a " style="left:119.05000000000001px;top:201.19px;font-size:6.85px;line-height:7.88px;color:#4a4a4a;width:100px;text-align:center;">Услуги</div>
<div class="a" style="left:185.6px;top:197.9px;width:67.50px;height:13.6px;background:#ececec;border:1px solid #d2d2d2;border-bottom:none;border-radius:2px 2px 0 0"></div>
<div class="a " style="left:168.95px;top:201.19px;font-size:6.85px;line-height:7.88px;color:#4a4a4a;width:100px;text-align:center;">Агентские услуги</div>
<div class="a" style="left:252.3px;top:197.9px;width:61.70px;height:13.6px;background:#ececec;border:1px solid #d2d2d2;border-bottom:none;border-radius:2px 2px 0 0"></div>
<div class="a " style="left:232.75px;top:201.19px;font-size:6.85px;line-height:7.88px;color:#4a4a4a;width:100px;text-align:center;">Счета расчетов</div>
<div class="a" style="left:313.2px;top:197.9px;width:86.10px;height:13.6px;background:#ececec;border:1px solid #d2d2d2;border-bottom:none;border-radius:2px 2px 0 0"></div>
<div class="a " style="left:305.85px;top:201.19px;font-size:6.85px;line-height:7.88px;color:#4a4a4a;width:100px;text-align:center;">Реквизиты печати и ЭД</div>
<div class="a" style="left:398.5px;top:197.9px;width:70.80px;height:13.6px;background:#ececec;border:1px solid #d2d2d2;border-bottom:none;border-radius:2px 2px 0 0"></div>
<div class="a " style="left:383.5px;top:201.19px;font-size:6.85px;line-height:7.88px;color:#4a4a4a;width:100px;text-align:center;">Списание бланков</div>
<div class="a" style="left:468.5px;top:197.9px;width:26.30px;height:13.6px;background:#ececec;border:1px solid #d2d2d2;border-bottom:none;border-radius:2px 2px 0 0"></div>
<div class="a " style="left:431.25px;top:201.19px;font-size:6.85px;line-height:7.88px;color:#4a4a4a;width:100px;text-align:center;">CMR</div>
<div class="a" style="left:494px;top:197.9px;width:82.50px;height:13.6px;background:#ececec;border:1px solid #d2d2d2;border-bottom:none;border-radius:2px 2px 0 0"></div>
<div class="a " style="left:484.85px;top:201.19px;font-size:6.85px;line-height:7.88px;color:#4a4a4a;width:100px;text-align:center;">Материалы заказчика</div>
<div class="btn" style="left:114.2px;top:216.5px;width:44.40px;height:14.10px;"></div>
<div class="a " style="left:111.4px;top:219.84px;font-size:6.9px;line-height:7.93px;color:#4a4a4a;width:50px;text-align:center;">Добавить</div>
<div class="btn" style="left:169.4px;top:216.5px;width:32.10px;height:14.10px;"></div>
<div class="a" style="left:185.5px;top:217px;width:0.80px;height:13.00px;background:#dedede"></div>
<svg class="a" style="left:173.8px;top:219.6px;overflow:visible" width="7" height="8" viewBox="0 0 7 8"><path d="M3.5 0.3 L6.8 3.8 H4.8 V7.6 H2.2 V3.8 H0.2 Z" fill="#3f86d6"/></svg>
<svg class="a" style="left:189.6px;top:219.2px;overflow:visible" width="7" height="8" viewBox="0 0 7 8"><path d="M3.5 7.7 L6.8 4.2 H4.8 V0.4 H2.2 V4.2 H0.2 Z" fill="#3f86d6"/></svg>
<div class="btn" style="left:212.7px;top:216.5px;width:50.10px;height:14.10px;"></div>
<div class="a " style="left:219.6px;top:219.84px;font-size:6.9px;line-height:7.93px;color:#4a4a4a;">Заполнить</div>
<svg class="a" style="left:255.5px;top:223px;overflow:visible" width="3" height="2" viewBox="0 0 3 2"><path d="M0 0 H2.8 L1.4 1.7 Z" fill="#555"/></svg>
<div class="btn" style="left:268.3px;top:216.5px;width:38.30px;height:14.10px;"></div>
<div class="a " style="left:262.45px;top:219.84px;font-size:6.9px;line-height:7.93px;color:#4a4a4a;width:50px;text-align:center;">Подбор</div>
<div class="btn" style="left:311.6px;top:216.5px;width:63.20px;height:14.10px;"></div>
<div class="a " style="left:308.2px;top:219.84px;font-size:6.9px;line-height:7.93px;color:#4a4a4a;width:70px;text-align:center;">Подбор РО.BY</div>
<div class="btn" style="left:379.8px;top:216.5px;width:15.70px;height:14.10px;"></div>
<svg class="a" style="left:384px;top:219.8px;overflow:visible" width="8.5" height="8.5" viewBox="0 0 8.5 8.5"><rect x="0.3" y="0.3" width="1.2" height="6.6" fill="#444"/><path d="M2.2 0.8 H6.6 M2.2 2.4 H6.6 M2.2 4 H5 M2.2 5.6 H4.4" stroke="#777" stroke-width="0.8"/><circle cx="5.6" cy="5.4" r="1.5" fill="#fff" stroke="#666" stroke-width="0.7"/><path d="M6.6 6.5 L7.9 8" stroke="#e0904a" stroke-width="0.9"/></svg>
<div class="btn" style="left:400.3px;top:216.5px;width:45.20px;height:14.10px;"></div>
<div class="a " style="left:398.0px;top:219.84px;font-size:6.9px;line-height:7.93px;color:#555;width:50px;text-align:center;">Изменить</div>
<div class="btn" style="left:451px;top:216.5px;width:15.50px;height:14.10px;"></div>
<svg class="a" style="left:454px;top:219.5px;overflow:visible" width="8.8" height="7.6" viewBox="0 0 8.8 7.6"><rect x="0.4" y="0.4" width="8" height="6.8" fill="#fff" stroke="#555" stroke-width="0.8"/><path d="M1.8 1.9 H7 M1.8 5.7 H7" stroke="#888" stroke-width="0.5"/><path d="M4.4 2.4 V5.2" stroke="#555" stroke-width="0.6"/><path d="M3.4 3.2 L4.4 2.2 L5.4 3.2 Z M3.4 4.4 L4.4 5.4 L5.4 4.4 Z" fill="#4a6aa8"/></svg>
<div class="btn" style="left:978.2px;top:216.5px;width:32.50px;height:14.00px;"></div>
<div class="a " style="left:985.3px;top:219.64px;font-size:6.9px;line-height:7.93px;color:#4a4a4a;">Еще</div>
<svg class="a" style="left:1003px;top:223px;overflow:visible" width="3" height="2" viewBox="0 0 3 2"><path d="M0 0 H2.8 L1.4 1.7 Z" fill="#555"/></svg>
<div class="a" style="left:114.4px;top:235.3px;width:896.20px;height:237.70px;border:1px solid #cfcfcf"></div>
<div class="a" style="left:115.4px;top:236.3px;width:894.20px;height:16.90px;background:#f0f0f0;border-bottom:1px solid #dcdcdc"></div>
<div class="a" style="left:150px;top:236.3px;width:0.80px;height:16.10px;background:#e2e2e2"></div>
<div class="a" style="left:278.4px;top:236.3px;width:0.80px;height:16.10px;background:#e2e2e2"></div>
<div class="a" style="left:289.5px;top:236.3px;width:0.80px;height:16.10px;background:#e2e2e2"></div>
<div class="a" style="left:358px;top:236.3px;width:0.80px;height:16.10px;background:#e2e2e2"></div>
<div class="a" style="left:416.6px;top:236.3px;width:0.80px;height:16.10px;background:#e2e2e2"></div>
<div class="a" style="left:474.3px;top:236.3px;width:0.80px;height:16.10px;background:#e2e2e2"></div>
<div class="a" style="left:540.6px;top:236.3px;width:0.80px;height:16.10px;background:#e2e2e2"></div>
<div class="a" style="left:584.5px;top:236.3px;width:0.80px;height:16.10px;background:#e2e2e2"></div>
<div class="a" style="left:643.1px;top:236.3px;width:0.80px;height:16.10px;background:#e2e2e2"></div>
<div class="a" style="left:685.6px;top:236.3px;width:0.80px;height:16.10px;background:#e2e2e2"></div>
<div class="a" style="left:730px;top:236.3px;width:0.80px;height:16.10px;background:#e2e2e2"></div>
<div class="a" style="left:789.8px;top:236.3px;width:0.80px;height:16.10px;background:#e2e2e2"></div>
<div class="a" style="left:842.4px;top:236.3px;width:0.80px;height:16.10px;background:#e2e2e2"></div>
<div class="a" style="left:913.1px;top:236.3px;width:0.80px;height:16.10px;background:#e2e2e2"></div>
<div class="a" style="left:971.4px;top:236.3px;width:0.80px;height:16.10px;background:#e2e2e2"></div>
<div class="a" style="left:115.4px;top:236.3px;width:894.20px;height:16.10px;overflow:hidden">
<div class="a " style="left:3.1999999999999886px;top:3.29px;font-size:6.85px;line-height:7.88px;color:#5a5a5a;">N</div>
<div class="a " style="left:39.400000000000006px;top:3.29px;font-size:6.85px;line-height:7.88px;color:#5a5a5a;">Номенклатура</div>
<div class="a " style="left:167.29999999999998px;top:3.29px;font-size:6.85px;line-height:7.88px;color:#5a5a5a;">Е</div>
<div class="a " style="left:178.49999999999997px;top:3.29px;font-size:6.85px;line-height:7.88px;color:#5a5a5a;">Документ оприх...</div>
<div class="a " style="left:247.4px;top:3.29px;font-size:6.85px;line-height:7.88px;color:#5a5a5a;">Количество</div>
<div class="a " style="left:306.5px;top:3.29px;font-size:6.85px;line-height:7.88px;color:#5a5a5a;">Цена без НДС</div>
<div class="a " style="left:363.29999999999995px;top:3.29px;font-size:6.85px;line-height:7.88px;color:#5a5a5a;">Сумма без НДС</div>
<div class="a " style="left:429.6px;top:3.29px;font-size:6.85px;line-height:7.88px;color:#5a5a5a;">%НДС</div>
<div class="a " style="left:474.1px;top:3.29px;font-size:6.85px;line-height:7.88px;color:#5a5a5a;">Сумма НДС</div>
<div class="a " style="left:532.1px;top:3.29px;font-size:6.85px;line-height:7.88px;color:#5a5a5a;">Всего</div>
<div class="a " style="left:574.8000000000001px;top:3.29px;font-size:6.85px;line-height:7.88px;color:#5a5a5a;">Счет учета</div>
<div class="a " style="left:618.6px;top:3.29px;font-size:6.85px;line-height:7.88px;color:#5a5a5a;">Счет доходов</div>
<div class="a " style="left:678.6px;top:3.29px;font-size:6.85px;line-height:7.88px;color:#5a5a5a;">Субконто</div>
<div class="a " style="left:731.2px;top:3.29px;font-size:6.85px;line-height:7.88px;color:#5a5a5a;">Счет учета НДС ...</div>
<div class="a " style="left:802.3000000000001px;top:3.29px;font-size:6.85px;line-height:7.88px;color:#5a5a5a;">Счет расходов</div>
<div class="a " style="left:860.3000000000001px;top:3.29px;font-size:6.85px;line-height:7.88px;color:#5a5a5a;">Тек. доп. р</div>
</div>
<div class="a" style="left:115.4px;top:267.6px;width:894.20px;height:0.80px;background:#e8e8e8"></div>
<div class="a " style="left:125.5px;top:257.14px;font-size:6.85px;line-height:7.88px;color:#525252;width:20px;text-align:right;">1</div>
<div class="a " style="left:154.8px;top:257.14px;font-size:6.85px;line-height:7.88px;color:#505050;">Крем длярук питательный BLOOM...</div>
<div class="a " style="left:283.3px;top:257.14px;font-size:6.85px;line-height:7.88px;color:#666;">.</div>
<div class="a " style="left:293.9px;top:257.14px;font-size:6.85px;line-height:7.88px;color:#505050;">Партия 0000-00...</div>
<div class="a " style="left:362.2px;top:257.14px;font-size:6.85px;line-height:7.88px;color:#505050;width:50px;text-align:right;">10,000</div>
<div class="a " style="left:419.4px;top:257.14px;font-size:6.85px;line-height:7.88px;color:#505050;width:50px;text-align:right;">5,54</div>
<div class="a " style="left:485.9px;top:257.14px;font-size:6.85px;line-height:7.88px;color:#505050;width:50px;text-align:right;">55,40</div>
<div class="a " style="left:545px;top:257.14px;font-size:6.85px;line-height:7.88px;color:#505050;">Без НДС</div>
<div class="a " style="left:630.6px;top:257.14px;font-size:6.85px;line-height:7.88px;color:#505050;width:50px;text-align:right;">55,40</div>
<div class="a " style="left:690.2px;top:257.14px;font-size:6.85px;line-height:7.88px;color:#505050;">41.1</div>
<div class="a " style="left:734px;top:257.14px;font-size:6.85px;line-height:7.88px;color:#505050;">90.1.1</div>
<div class="a " style="left:794px;top:257.14px;font-size:6.85px;line-height:7.88px;color:#505050;">Выручка</div>
<div class="a " style="left:846.6px;top:257.14px;font-size:6.85px;line-height:7.88px;color:#c8c8c8;">&lt;не требуется&gt;</div>
<div class="a " style="left:917.7px;top:257.14px;font-size:6.85px;line-height:7.88px;color:#505050;">90.4.1</div>
<div class="a" style="left:115.4px;top:282.8px;width:894.20px;height:0.80px;background:#e8e8e8"></div>
<div class="a " style="left:125.5px;top:272.34px;font-size:6.85px;line-height:7.88px;color:#525252;width:20px;text-align:right;">2</div>
<div class="a " style="left:154.8px;top:272.34px;font-size:6.85px;line-height:7.88px;color:#505050;">Xiaomi Лампа настольная Mi LED ...</div>
<div class="a " style="left:293.9px;top:272.34px;font-size:6.85px;line-height:7.88px;color:#505050;">Партия 0000-00...</div>
<div class="a " style="left:362.2px;top:272.34px;font-size:6.85px;line-height:7.88px;color:#505050;width:50px;text-align:right;">5,000</div>
<div class="a " style="left:419.4px;top:272.34px;font-size:6.85px;line-height:7.88px;color:#505050;width:50px;text-align:right;">174,00</div>
<div class="a " style="left:485.9px;top:272.34px;font-size:6.85px;line-height:7.88px;color:#505050;width:50px;text-align:right;">870,00</div>
<div class="a " style="left:545px;top:272.34px;font-size:6.85px;line-height:7.88px;color:#505050;">Без НДС</div>
<div class="a " style="left:630.6px;top:272.34px;font-size:6.85px;line-height:7.88px;color:#505050;width:50px;text-align:right;">870,00</div>
<div class="a " style="left:690.2px;top:272.34px;font-size:6.85px;line-height:7.88px;color:#505050;">41.1</div>
<div class="a " style="left:734px;top:272.34px;font-size:6.85px;line-height:7.88px;color:#505050;">90.1.1</div>
<div class="a " style="left:794px;top:272.34px;font-size:6.85px;line-height:7.88px;color:#505050;">Выручка</div>
<div class="a " style="left:846.6px;top:272.34px;font-size:6.85px;line-height:7.88px;color:#c8c8c8;">&lt;не требуется&gt;</div>
<div class="a " style="left:917.7px;top:272.34px;font-size:6.85px;line-height:7.88px;color:#505050;">90.4.1</div>
<div class="a" style="left:115.4px;top:298.0px;width:894.20px;height:0.80px;background:#e8e8e8"></div>
<div class="a " style="left:125.5px;top:287.54px;font-size:6.85px;line-height:7.88px;color:#525252;width:20px;text-align:right;">3</div>
<div class="a " style="left:154.8px;top:287.54px;font-size:6.85px;line-height:7.88px;color:#505050;">Крышка щетки робот-пылесоса Xia...</div>
<div class="a " style="left:293.9px;top:287.54px;font-size:6.85px;line-height:7.88px;color:#505050;">Партия 0000-00...</div>
<div class="a " style="left:362.2px;top:287.54px;font-size:6.85px;line-height:7.88px;color:#505050;width:50px;text-align:right;">5,000</div>
<div class="a " style="left:419.4px;top:287.54px;font-size:6.85px;line-height:7.88px;color:#505050;width:50px;text-align:right;">114,00</div>
<div class="a " style="left:485.9px;top:287.54px;font-size:6.85px;line-height:7.88px;color:#505050;width:50px;text-align:right;">570,00</div>
<div class="a " style="left:545px;top:287.54px;font-size:6.85px;line-height:7.88px;color:#505050;">Без НДС</div>
<div class="a " style="left:630.6px;top:287.54px;font-size:6.85px;line-height:7.88px;color:#505050;width:50px;text-align:right;">570,00</div>
<div class="a " style="left:690.2px;top:287.54px;font-size:6.85px;line-height:7.88px;color:#505050;">41.1</div>
<div class="a " style="left:734px;top:287.54px;font-size:6.85px;line-height:7.88px;color:#505050;">90.1.1</div>
<div class="a " style="left:794px;top:287.54px;font-size:6.85px;line-height:7.88px;color:#505050;">Выручка</div>
<div class="a " style="left:846.6px;top:287.54px;font-size:6.85px;line-height:7.88px;color:#c8c8c8;">&lt;не требуется&gt;</div>
<div class="a " style="left:917.7px;top:287.54px;font-size:6.85px;line-height:7.88px;color:#505050;">90.4.1</div>
<div class="a" style="left:115.4px;top:298.4px;width:894.20px;height:15.20px;background:#fdf0c2"></div>
<div class="a" style="left:150px;top:298.4px;width:0.80px;height:15.20px;background:#fff7dc"></div>
<div class="a" style="left:278.4px;top:298.4px;width:0.80px;height:15.20px;background:#fff7dc"></div>
<div class="a" style="left:289.5px;top:298.4px;width:0.80px;height:15.20px;background:#fff7dc"></div>
<div class="a" style="left:358px;top:298.4px;width:0.80px;height:15.20px;background:#fff7dc"></div>
<div class="a" style="left:416.6px;top:298.4px;width:0.80px;height:15.20px;background:#fff7dc"></div>
<div class="a" style="left:474.3px;top:298.4px;width:0.80px;height:15.20px;background:#fff7dc"></div>
<div class="a" style="left:540.6px;top:298.4px;width:0.80px;height:15.20px;background:#fff7dc"></div>
<div class="a" style="left:584.5px;top:298.4px;width:0.80px;height:15.20px;background:#fff7dc"></div>
<div class="a" style="left:643.1px;top:298.4px;width:0.80px;height:15.20px;background:#fff7dc"></div>
<div class="a" style="left:685.6px;top:298.4px;width:0.80px;height:15.20px;background:#fff7dc"></div>
<div class="a" style="left:730px;top:298.4px;width:0.80px;height:15.20px;background:#fff7dc"></div>
<div class="a" style="left:789.8px;top:298.4px;width:0.80px;height:15.20px;background:#fff7dc"></div>
<div class="a" style="left:842.4px;top:298.4px;width:0.80px;height:15.20px;background:#fff7dc"></div>
<div class="a" style="left:913.1px;top:298.4px;width:0.80px;height:15.20px;background:#fff7dc"></div>
<div class="a" style="left:971.4px;top:298.4px;width:0.80px;height:15.20px;background:#fff7dc"></div>
<div class="a " style="left:125.5px;top:302.74px;font-size:6.85px;line-height:7.88px;color:#525252;width:20px;text-align:right;">4</div>
<div class="a " style="left:154.8px;top:302.74px;font-size:6.85px;line-height:7.88px;color:#505050;">Фен Xiaomi Mi Ionic Hair Dryer H30...</div>
<div class="a " style="left:293.9px;top:302.74px;font-size:6.85px;line-height:7.88px;color:#505050;">Партия 0000-00...</div>
<div class="a " style="left:362.2px;top:302.74px;font-size:6.85px;line-height:7.88px;color:#505050;width:50px;text-align:right;">2,000</div>
<div class="a " style="left:419.4px;top:302.74px;font-size:6.85px;line-height:7.88px;color:#505050;width:50px;text-align:right;">162,00</div>
<div class="a " style="left:485.9px;top:302.74px;font-size:6.85px;line-height:7.88px;color:#505050;width:50px;text-align:right;">324,00</div>
<div class="a " style="left:545px;top:302.74px;font-size:6.85px;line-height:7.88px;color:#505050;">Без НДС</div>
<div class="a " style="left:630.6px;top:302.74px;font-size:6.85px;line-height:7.88px;color:#505050;width:50px;text-align:right;">324,00</div>
<div class="a " style="left:690.2px;top:302.74px;font-size:6.85px;line-height:7.88px;color:#505050;">41.1</div>
<div class="a " style="left:734px;top:302.74px;font-size:6.85px;line-height:7.88px;color:#505050;">90.1.1</div>
<div class="a" style="left:790.3px;top:299.2px;width:51.50px;height:13.60px;background:#fbe18a;border:1px solid #e2b93a"></div>
<div class="a " style="left:794px;top:302.74px;font-size:6.85px;line-height:7.88px;color:#505050;">Выручка</div>
<div class="a " style="left:846.6px;top:302.74px;font-size:6.85px;line-height:7.88px;color:#c8c8c8;">&lt;не требуется&gt;</div>
<div class="a " style="left:917.7px;top:302.74px;font-size:6.85px;line-height:7.88px;color:#505050;">90.4.1</div>
<svg class="a" style="left:118.5px;top:466.8px;overflow:visible" width="3" height="3" viewBox="0 0 3 3"><path d="M2.4 0 V2.8 L0.2 1.4 Z" fill="#c2c2c2"/></svg>
<div class="a" style="left:124.5px;top:466.4px;width:873.00px;height:3.80px;background:#e2e2e2;border-radius:2px"></div>
<div class="a" style="left:126.5px;top:466.3px;width:384.50px;height:4.00px;background:#a8a8a8;border-radius:2px"></div>
<svg class="a" style="left:1002.5px;top:466.6px;overflow:visible" width="3" height="3" viewBox="0 0 3 3"><path d="M0.2 0 V2.8 L2.4 1.4 Z" fill="#555"/></svg>
<div class="a " style="left:751.5px;top:485.69px;font-size:6.85px;line-height:7.88px;color:#555;">Всего:</div>
<div class="inp" style="left:775.7px;top:483.1px;width:69.60px;height:12.50px;border-color:#dcdcdc"></div>
<div class="a " style="left:783px;top:485.55px;font-size:7.0px;line-height:8.05px;color:#505050;width:60px;text-align:right;">1 819,40</div>
<div class="a " style="left:850.6px;top:485.55px;font-size:7.0px;line-height:8.05px;color:#525252;">BYN</div>
<div class="a " style="left:877.5px;top:485.69px;font-size:6.85px;line-height:7.88px;color:#555;">НДС (в т.ч.):</div>
<div class="inp" style="left:920px;top:483.1px;width:69.60px;height:12.50px;border-color:#dcdcdc"></div>
<div class="a " style="left:947.2px;top:485.55px;font-size:7.0px;line-height:8.05px;color:#505050;width:40px;text-align:right;">0,00</div>
<div class="a " style="left:995px;top:485.55px;font-size:7.0px;line-height:8.05px;color:#525252;">BYN</div>
<div class="a glnk" style="left:108.2px;top:501.69px;font-size:6.85px;line-height:7.88px;">Скрыть дополнительные реквизиты</div>
<div class="a " style="left:113.2px;top:515.69px;font-size:6.85px;line-height:7.88px;color:#555;">Счет-фактура:</div>
<div class="btn" style="left:172.4px;top:513.2px;width:89.30px;height:13.20px;"></div>
<div class="a " style="left:172.0px;top:515.75px;font-size:7.0px;line-height:8.05px;color:#525252;width:90px;text-align:center;">Выписать счет-фактуру</div>
<div class="a " style="left:113.2px;top:534.69px;font-size:6.85px;line-height:7.88px;color:#555;">Комментарий:</div>
<div class="inp" style="left:160.9px;top:532.3px;width:218.90px;height:13.20px;border-color:#cdcdcd"></div>
<div class="a " style="left:385.9px;top:534.69px;font-size:6.85px;line-height:7.88px;color:#555;">Ответственный:</div>
<div class="inp" style="left:438.6px;top:532.3px;width:219.20px;height:13.20px;border-color:#cdcdcd"></div>
<div class="a" style="left:635.5px;top:532.8px;width:0.80px;height:12.20px;background:#d4d4d4"></div>
<div class="a" style="left:646.6px;top:532.8px;width:0.80px;height:12.20px;background:#d4d4d4"></div>
<div class="a " style="left:440.8px;top:535.25px;font-size:7.0px;line-height:8.05px;color:#3e3e3e;">assistant</div>
<svg class="a" style="left:639.6px;top:538.0px;overflow:visible" width="3" height="2" viewBox="0 0 3 2"><path d="M0 0 H2.8 L1.4 1.7 Z" fill="#555"/></svg>
<svg class="a" style="left:649.2px;top:535.9px;overflow:visible" width="6" height="6" viewBox="0 0 6 6"><rect x="0.4" y="2.2" width="3.2" height="3.2" rx="0.6" fill="#fff" stroke="#666" stroke-width="0.6"/><rect x="2.2" y="0.4" width="3.2" height="3.2" rx="0.6" fill="#fff" stroke="#666" stroke-width="0.6"/></svg>
</body></html>
